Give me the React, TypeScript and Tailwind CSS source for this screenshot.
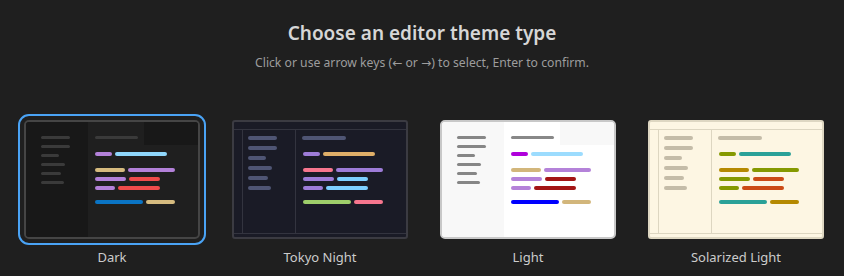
import React from "react";

type Palette = {
  bg: string;
  side: string;
  border: string;
  divider: string;
  muted: string;
  title: string;
  code: string[];
};

// widths of the mock code bars, color index into palette.code
const codeRows: [number, number][][] = [
  [
    [17, 0],
    [52, 1],
  ],
  [
    [30, 2],
    [47, 3],
  ],
  [
    [31, 4],
    [31, 5],
  ],
  [
    [20, 6],
    [42, 7],
  ],
  [
    [48, 8],
    [29, 9],
  ],
];

const sideWidths = [29, 29, 18, 24, 20, 23];

function CodeLines({ colors }: { colors: string[] }) {
  const margins = ["mt-0", "mt-[12px]", "mt-[5px]", "mt-[5px]", "mt-[10px]"];
  return (
    <div className="flex flex-col">
      {codeRows.map((row, i) => (
        <div key={i} className={`flex gap-[3px] ${margins[i]}`}>
          {row.map(([w, c], j) => (
            <div
              key={j}
              className="h-[4px] rounded-full"
              style={{ width: w, backgroundColor: colors[c] }}
            />
          ))}
        </div>
      ))}
    </div>
  );
}

function SideLines({ color, h }: { color: string; h: number }) {
  return (
    <div className="flex flex-col gap-[6px]">
      {sideWidths.map((w, i) => (
        <div
          key={i}
          className="rounded-full"
          style={{ width: w, height: h, backgroundColor: color }}
        />
      ))}
    </div>
  );
}

// VS Code style preview: sidebar + tab bar
function TabbedPreview({ p }: { p: Palette }) {
  return (
    <div
      className="flex w-[176px] h-[119px] border-2 rounded-[5px] overflow-hidden"
      style={{ borderColor: p.border, backgroundColor: p.bg }}
    >
      <div
        className="w-[62px] pl-[15px] pt-[14px]"
        style={{ backgroundColor: p.side }}
      >
        <SideLines color={p.muted} h={3} />
      </div>
      <div className="flex-1 flex flex-col">
        <div className="flex h-[23px]" style={{ backgroundColor: p.side }}>
          <div
            className="w-[56px] pl-[7px] pt-[14px]"
            style={{ backgroundColor: p.bg }}
          >
            <div
              className="w-[43px] h-[3px] rounded-full"
              style={{ backgroundColor: p.title }}
            />
          </div>
        </div>
        <div className="pl-[7px] pt-[7px]">
          <CodeLines colors={p.code} />
        </div>
      </div>
    </div>
  );
}

// framed preview: title bar, activity bar, status bar
function FramedPreview({ p }: { p: Palette }) {
  return (
    <div
      className="flex flex-col w-[176px] h-[119px] border-2 rounded-[3px] overflow-hidden"
      style={{ borderColor: p.border, backgroundColor: p.bg }}
    >
      <div
        className="h-[8px] border-b shrink-0"
        style={{ borderColor: p.divider }}
      />
      <div className="flex flex-1">
        <div
          className="w-[9px] border-r"
          style={{ borderColor: p.divider }}
        />
        <div
          className="w-[53px] pl-[5px] pt-[6px] border-r"
          style={{ borderColor: p.divider }}
        >
          <SideLines color={p.muted} h={4} />
        </div>
        <div className="flex-1 pl-[6px] pt-[6px]">
          <div
            className="w-[44px] h-[4px] rounded-full"
            style={{ backgroundColor: p.title }}
          />
          <div className="pl-[1px] pt-[12px]">
            <CodeLines colors={p.code} />
          </div>
        </div>
      </div>
      <div
        className="h-[4px] border-t shrink-0"
        style={{ borderColor: p.divider }}
      />
    </div>
  );
}

const dark: Palette = {
  bg: "#1f1f1f",
  side: "#181818",
  border: "#454545",
  divider: "#2b2b2b",
  muted: "#3a3a3a",
  title: "#3a3a3a",
  code: [
    "#b381d9",
    "#8fd7fb",
    "#d6bb7f",
    "#b381d9",
    "#b381d9",
    "#ef4b4b",
    "#b381d9",
    "#ef4b4b",
    "#0a74c4",
    "#d6bb7f",
  ],
};

const tokyo: Palette = {
  bg: "#1a1b26",
  side: "#1a1b26",
  border: "#3b3b42",
  divider: "#33343f",
  muted: "#4f5574",
  title: "#4f5574",
  code: [
    "#9d7cd8",
    "#e0af68",
    "#f7768e",
    "#9d7cd8",
    "#9d7cd8",
    "#7dcfff",
    "#9d7cd8",
    "#7dcfff",
    "#9ece6a",
    "#f7768e",
  ],
};

const light: Palette = {
  bg: "#ffffff",
  side: "#f8f8f8",
  border: "#c8c8c8",
  divider: "#e5e5e5",
  muted: "#868686",
  title: "#888888",
  code: [
    "#af00db",
    "#9cdcfe",
    "#d2b67b",
    "#b482d9",
    "#b482d9",
    "#a31515",
    "#b482d9",
    "#a31515",
    "#0000ff",
    "#d2b67b",
  ],
};

const solarized: Palette = {
  bg: "#fdf6e3",
  side: "#fdf6e3",
  border: "#ded7c2",
  divider: "#ddd6c1",
  muted: "#c4bca8",
  title: "#c4bca8",
  code: [
    "#859900",
    "#2aa198",
    "#b58900",
    "#859900",
    "#859900",
    "#cb4b16",
    "#859900",
    "#cb4b16",
    "#2aa198",
    "#b58900",
  ],
};

const themes = [
  { name: "Dark", palette: dark, framed: false },
  { name: "Tokyo Night", palette: tokyo, framed: true },
  { name: "Light", palette: light, framed: false },
  { name: "Solarized Light", palette: solarized, framed: true },
];

export default function App() {
  const selected = 0;
  return (
    <div
      className="w-[844px] h-[276px] bg-[#1f1f1f] flex flex-col items-center pt-[20px]"
      style={{ fontFamily: '"Noto Sans", "DejaVu Sans", sans-serif' }}
    >
      <h1 className="text-[19px] leading-[26px] font-semibold text-[#d6d6d6]">
        Choose an editor theme type
      </h1>
      <p className="mt-[8px] text-[12.2px] leading-[18px] text-[#9d9d9d]">
        Click or use arrow keys (← or →) to select, Enter to confirm.
      </p>
      <div className="flex gap-[32px] mt-[48px] pl-[4px]">
        {themes.map((t, i) => (
          <div key={t.name} className="flex flex-col items-center">
            <div
              className={
                i === selected
                  ? "rounded-[5px] outline-2 outline-offset-[4px] outline-[#4aa3f5]"
                  : "rounded-[5px]"
              }
            >
              {t.framed ? (
                <FramedPreview p={t.palette} />
              ) : (
                <TabbedPreview p={t.palette} />
              )}
            </div>
            <span className="mt-[10px] text-[13px] leading-[16px] text-[#cccccc]">
              {t.name}
            </span>
          </div>
        ))}
      </div>
    </div>
  );
}
